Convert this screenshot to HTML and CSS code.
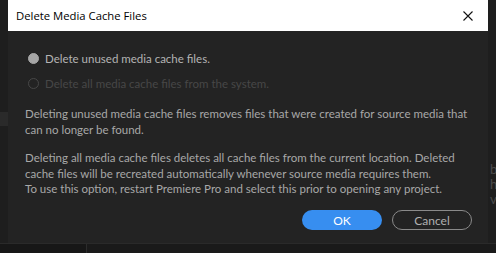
FILE: index.html
```html
<!DOCTYPE html>
<html lang="en">
<head>
    <meta charset="UTF-8">
    <meta name="viewport" content="width=device-width, initial-scale=1.0">
    <title>Delete Media Cache Files</title>
    <link rel="stylesheet" href="styles.css">
</head>
<body>
    <div class="screen">
        <div class="side-left"><div class="side-tab"></div></div>

        <div class="dialog">
            <div class="titlebar">
                <span class="title">Delete Media Cache Files</span>
                <svg class="close" width="10" height="10" viewBox="0 0 10 10">
                    <path d="M0.5 0.5 L9.5 9.5 M9.5 0.5 L0.5 9.5" stroke="#111" stroke-width="1.1" fill="none"/>
                </svg>
            </div>
            <div class="content">
                <label class="radio">
                    <span class="dot checked"></span>
                    Delete unused media cache files.
                </label>
                <label class="radio disabled">
                    <span class="dot"></span>
                    Delete all media cache files from the system.
                </label>

                <p class="info">Deleting unused media cache files removes files that were created for source media that<br>can no longer be found.</p>
                <p class="info">Deleting all media cache files deletes all cache files from the current location. Deleted<br>cache files will be recreated automatically whenever source media requires them.<br>To use this option, restart Premiere Pro and select this prior to opening any project.</p>

                <div class="buttons">
                    <button type="button" class="ok">OK</button>
                    <button type="button" class="cancel">Cancel</button>
                </div>
            </div>
        </div>

        <div class="side-right">
            <span>b</span>
            <span>h</span>
            <span>v</span>
        </div>

        <div class="bottom"><div class="bottom-left"></div><div class="bottom-right"></div></div>
    </div>
</body>
</html>
```

FILE: styles.css
```css
body {
    margin: 0;
    background-color: #1b1b1b;
    font-family: Lato, "Open Sans", sans-serif;
}

.screen {
    display: grid;
    grid-template-columns: 8px 480px 8px;
    grid-template-rows: 243px 10px;
    width: 496px;
    height: 253px;
    overflow: hidden;
}

.side-left {
    background-color: #1e1e1e;
    padding-top: 112px;
}

.side-tab {
    height: 14px;
    background-color: #2a2a2a;
}

.side-right {
    background-color: #1e1e1e;
    padding-top: 162px;
    display: flex;
    flex-direction: column;
    font-size: 13px;
    line-height: 15px;
    color: #4a4a4a;
    overflow: hidden;
}

.side-right span {
    padding-left: 2px;
}

.dialog {
    background-color: #232323;
    display: flex;
    flex-direction: column;
}

.titlebar {
    height: 31px;
    background-color: #fff;
    display: flex;
    align-items: center;
    justify-content: space-between;
    padding: 0 15px 0 8px;
}

.title {
    font-family: "Open Sans", sans-serif;
    font-size: 11.3px;
    color: #000;
}

.content {
    padding: 15px 16px 0 17px;
    color: #a8a8a8;
    font-size: 11.5px;
}

.radio {
    display: flex;
    align-items: center;
    gap: 6px;
    height: 25px;
    padding-left: 3px;
    color: #b4b4b4;
}

.radio.disabled {
    color: #474747;
}

.dot {
    width: 9px;
    height: 9px;
    border-radius: 50%;
    border: 1px solid #474747;
}

.dot.checked {
    background-color: #a6a6a6;
    border-color: #a6a6a6;
}

.info {
    margin: 10px 0 0;
    line-height: 15.5px;
    white-space: nowrap;
}

.info + .info {
    margin-top: 13px;
}

.buttons {
    display: flex;
    justify-content: flex-end;
    gap: 10px;
    margin-top: 13.5px;
}

button {
    width: 80px;
    height: 20px;
    border-radius: 10px;
    font-family: Lato, sans-serif;
    font-size: 12px;
    padding: 0;
    cursor: pointer;
}

button.ok {
    background-color: #378ef0;
    border: none;
    color: #fff;
}

button.cancel {
    background-color: transparent;
    border: 1px solid #8a8a8a;
    color: #b0b0b0;
}

.bottom {
    grid-column: 1 / 4;
    display: flex;
    border-top: 1px solid #2a2a2a;
}

.bottom-left {
    width: 86px;
    border-right: 1px solid #2c2c2c;
    background-color: #171717;
}

.bottom-right {
    flex: 1;
    background-color: #1a1a1a;
}
```
